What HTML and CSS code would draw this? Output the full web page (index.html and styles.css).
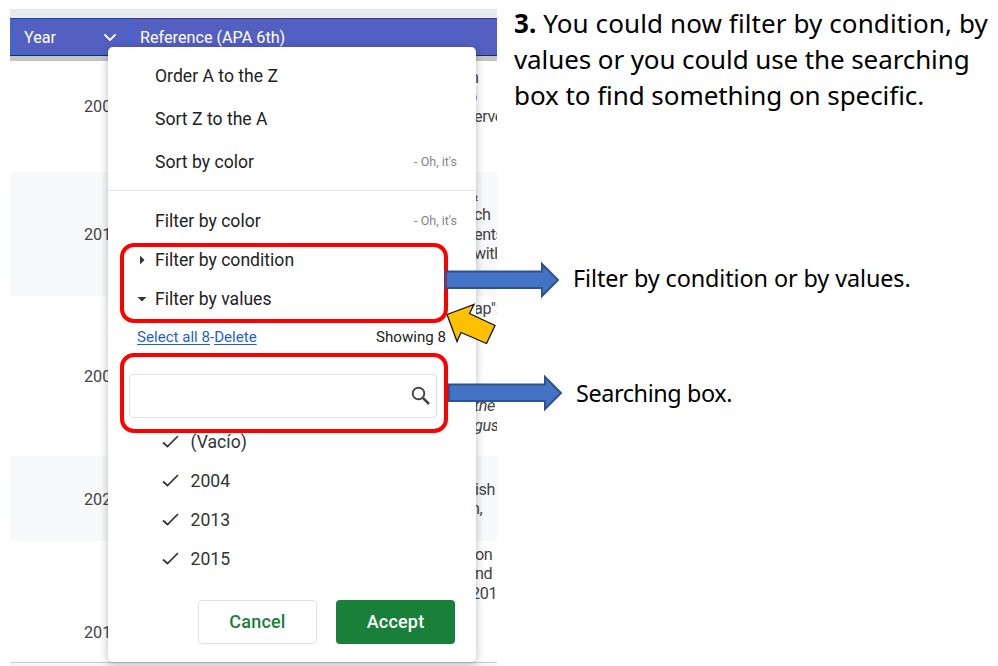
FILE: index.html
```html
<!DOCTYPE html>
<html lang="en">
<head>
<meta charset="utf-8">
<title>Filter menu guide</title>
<link rel="stylesheet" href="styles.css">
</head>
<body>
<main class="slide">
  <section class="sheet">
    <div class="strip"></div>
    <header class="sheet-head">
      <div class="head-year"><span>Year</span><svg width="14" height="9" viewBox="0 0 14 9"><path d="M1.500 1.500 7 7l5.500-5.500" fill="none" stroke="#fff" stroke-width="1.800"/></svg></div>
      <div class="head-ref">Reference (APA 6th)</div>
    </header>
    <div class="freeze"></div>
    <div class="row r1"><span class="year">2004</span><div class="ref"><p class="s4">n</p><p class="s6 link">o</p><p>erve</p></div></div>
    <div class="row r2 alt"><span class="year">2013</span><div class="ref"><p class="s6">&amp;</p><p>ch</p><p>ents</p><p>with</p></div></div>
    <div class="row r3"><span class="year">2004</span><div class="ref"><p>ap":</p><p class="later"><i>the</i></p><p><i>gus</i></p></div></div>
    <div class="row r4 alt"><span class="year">2020</span><div class="ref"><p>ish</p><p class="s4">n,</p></div></div>
    <div class="row r5"><span class="year">2015</span><div class="ref"><p>on</p><p>nd</p><p class="s4">2018</p></div></div>
    <div class="sheet-end"></div>

    <div class="menu">
      <div class="sort-group">
        <div class="item">Order A to the Z</div>
        <div class="item">Sort Z to the A</div>
        <div class="item">Sort by color<small>- Oh, it's</small></div>
      </div>
      <div class="filter-group">
        <div class="item">Filter by color<small>- Oh, it's</small></div>
        <div class="item"><svg class="caret" width="10" height="10" viewBox="0 0 10 10"><path d="M3 0.500v9L7.500 5z" fill="#333"/></svg>Filter by condition</div>
        <div class="item"><svg class="caret" width="10" height="10" viewBox="0 0 10 10"><path d="M0.500 3h9L5 7.500z" fill="#333"/></svg>Filter by values</div>
      </div>
      <div class="select-line"><span><u>Select all 8</u>-<u>Delete</u></span><b>Showing 8</b></div>
      <div class="search"><svg width="20" height="20" viewBox="0 0 20 20" fill="none" stroke="#444"><circle cx="7.500" cy="7.500" r="5.800" stroke-width="1.900"/><path d="m12 12 6 6" stroke-width="2.500"/></svg></div>
      <div class="values">
        <div><svg width="17" height="13" viewBox="0 0 17 13"><path d="m1 7.500 4.500 4L16 1" fill="none" stroke="#333" stroke-width="1.700"/></svg>(Vacío)</div>
        <div><svg width="17" height="13" viewBox="0 0 17 13"><path d="m1 7.500 4.500 4L16 1" fill="none" stroke="#333" stroke-width="1.700"/></svg>2004</div>
        <div><svg width="17" height="13" viewBox="0 0 17 13"><path d="m1 7.500 4.500 4L16 1" fill="none" stroke="#333" stroke-width="1.700"/></svg>2013</div>
        <div><svg width="17" height="13" viewBox="0 0 17 13"><path d="m1 7.500 4.500 4L16 1" fill="none" stroke="#333" stroke-width="1.700"/></svg>2015</div>
      </div>
      <div class="buttons"><div class="btn cancel">Cancel</div><div class="btn accept">Accept</div></div>
    </div>
  </section>

  <section class="notes">
    <p class="step"><span class="l1"><strong>3.</strong> You could now filter by condition, by</span><span class="l2">values or you could use the searching</span><span class="l3">box to find something on specific.</span></p>
    <p class="note n1">Filter by condition or by values.</p>
    <p class="note n2">Searching box.</p>
  </section>

  <svg class="marks" width="998" height="666" viewBox="0 0 998 666">
    <g fill="none" stroke="#f00" stroke-width="4">
      <rect x="122" y="245" width="324" height="76" rx="12"/>
      <rect x="122" y="355" width="324" height="76" rx="12"/>
    </g>
    <g fill="#4472c4" stroke="#2f528f" stroke-width="2">
      <path d="M446 271.500h96v-7.500l16 16-16 16v-8h-96z"/>
      <path d="M449 384.500h96v-7.500l16 16-16 16v-8h-96z"/>
    </g>
    <path d="M447 314.500 474 304.500 469.500 313.500 495 325.500 486.500 343.500 461 332.500 457 341.500z" fill="#ffc000" stroke="#111" stroke-width="1.300"/>
  </svg>
</main>
</body>
</html>
```
FILE: styles.css
```css
* { box-sizing: border-box; }
body { margin: 0; background: #fff; }
p { margin: 0; }
.slide { position: relative; display: flex; width: 998px; height: 666px; overflow: hidden; font-family: Roboto, "Liberation Sans", sans-serif; }

.sheet { position: relative; width: 487px; height: 657px; margin: 9px 0 0 10px; overflow: hidden; color: #444; font-size: 16.200px; white-space: nowrap; }
.strip { height: 9px; background: #e8eaed; }
.sheet-head { display: flex; height: 38px; background: #535fc1; border-top: 1px solid #343c87; border-bottom: 1px solid #252a52; color: #fff; }
.head-year { display: flex; align-items: center; justify-content: space-between; width: 118px; margin-left: 2px; padding: 0 12px 0 11px; border: 1px solid #1a73e8; }
.head-ref { padding-left: 10px; line-height: 38px; }
.freeze { height: 5px; background: #c4c4c4; }
.row { display: flex; background: #fff; }
.alt { background: #f8f9fb; }
.year { display: flex; align-items: center; width: 464px; flex: none; padding-left: 74px; }
.ref { line-height: 19.400px; letter-spacing: -.4px; }
.s6 { margin-left: -6px; }
.s4 { margin-left: -4px; }
.link { color: #1a73e8; }
.later { margin-top: 78px; }
.r1 { height: 111px; }
.r1 .year { padding-bottom: 21px; }
.r1 .ref { padding-top: 7px; }
.r2 { height: 124px; }
.r2 .ref { padding-top: 14px; }
.r3 { height: 160px; }
.r3 .ref { padding-top: 3px; }
.r4 { height: 85px; }
.r4 .ref { padding: 24px 0 0 1px; }
.r4 .year { padding-top: 1px; }
.r5 { height: 121px; }
.r5 .year { padding-top: 61px; }
.r5 .ref { padding: 4px 0 0 1px; }
.sheet-end { height: 4px; background: #f6f6f6; border-top: 1px solid #ccc; }

.menu { position: absolute; left: 98px; top: 38px; width: 368px; height: 615px; border-radius: 5px; background: #fff; box-shadow: 0 2px 9px rgba(0,0,0,.27); color: #222; font-size: 17.600px; }
.item { position: relative; display: flex; align-items: center; justify-content: space-between; padding: 0 19px 2px 47px; }
.item small { color: #858585; font-size: 12.500px; }
.caret { position: absolute; left: 29px; }
.sort-group { height: 144px; padding-top: 8px; border-bottom: 1px solid #dfe1e5; }
.sort-group .item { height: 43px; }
.filter-group { padding-top: 11px; }
.filter-group .item { height: 39px; }
.select-line { display: flex; align-items: center; justify-content: space-between; height: 37px; padding: 0 30px 1px 29px; font-size: 15.100px; }
.select-line span { color: #1f5fce; }
.select-line u { text-underline-offset: 2px; }
.select-line b { font-weight: 400; }
.search { display: flex; align-items: center; justify-content: flex-end; width: 308px; height: 44px; margin: 18px 0 0 21px; padding-right: 5px; border: 1px solid #dfe1e5; border-radius: 4px; }
.values { padding-top: 4px; color: #333; }
.values div { display: flex; align-items: center; gap: 11.500px; height: 39px; padding-left: 54px; }
.buttons { display: flex; gap: 19px; margin: 22px 0 0 90px; }
.btn { display: flex; align-items: center; justify-content: center; width: 119px; height: 44px; padding-bottom: 1px; border-radius: 4px; font-size: 18px; font-weight: 500; letter-spacing: .2px; }
.cancel { border: 1px solid #dfe1e5; color: #188038; }
.accept { background: #188038; color: #fff; }

.notes { flex: 1; padding: 5px 0 0 17px; color: #000; font-family: "Noto Sans", sans-serif; white-space: nowrap; }
.step { height: 108px; font-size: 26px; line-height: 36px; }
.step span { display: block; }
.l1 { letter-spacing: .1px; }
.l2 { letter-spacing: -.1px; }
.l3 { letter-spacing: -.06px; }
.note { font-size: 23.400px; line-height: 30px; letter-spacing: -.1px; }
.n1 { margin: 150px 0 0 59px; }
.n2 { margin: 85px 0 0 62px; letter-spacing: -.4px; }
.marks { position: absolute; left: 0; top: 0; }
```
